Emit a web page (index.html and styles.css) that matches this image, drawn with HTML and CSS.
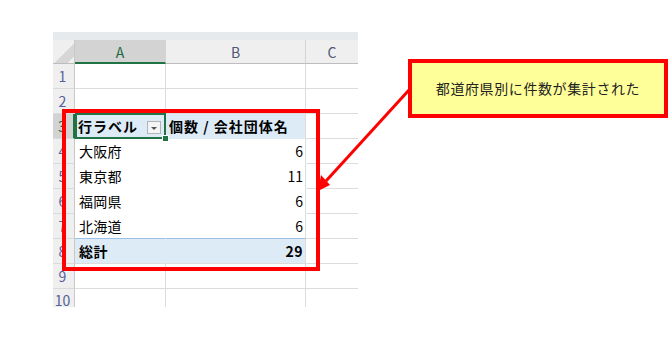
FILE: index.html
```html
<!DOCTYPE html>
<html lang="ja">
<head>
<meta charset="utf-8">
<title>ピボットテーブル</title>
<link rel="stylesheet" href="styles.css">
</head>
<body>
<div class="page">
  <div class="sheet">
    <div class="strip"></div>
    <div class="grid">
      <div class="corner"></div>
      <div class="colhead selected">A</div>
      <div class="colhead">B</div>
      <div class="colhead last">C</div>

      <div class="rowhead">1</div><div class="cell"></div><div class="cell"></div><div class="cell last"></div>
      <div class="rowhead">2</div><div class="cell"></div><div class="cell"></div><div class="cell last"></div>

      <div class="rowhead active">3</div>
      <div class="cell pv-head label active-cell"><span>行ラベル</span><span class="filter"></span></div>
      <div class="cell pv-head">個数 / 会社団体名</div>
      <div class="cell last"></div>

      <div class="rowhead">4</div><div class="cell pv label">大阪府</div><div class="cell pv num">6</div><div class="cell last"></div>
      <div class="rowhead">5</div><div class="cell pv label">東京都</div><div class="cell pv num">11</div><div class="cell last"></div>
      <div class="rowhead">6</div><div class="cell pv label">福岡県</div><div class="cell pv num">6</div><div class="cell last"></div>
      <div class="rowhead">7</div><div class="cell pv label pv-end">北海道</div><div class="cell pv num pv-end">6</div><div class="cell last"></div>

      <div class="rowhead">8</div><div class="cell pv-total label">総計</div><div class="cell pv-total num">29</div><div class="cell last"></div>
      <div class="rowhead">9</div><div class="cell"></div><div class="cell"></div><div class="cell last"></div>
      <div class="rowhead end">10</div><div class="cell end"></div><div class="cell end"></div><div class="cell last end"></div>
    </div>
  </div>

  <!-- annotation: red frame around the pivot table, callout and arrow -->
  <div class="frame"></div>
  <div class="callout">都道府県別に件数が集計された</div>
  <svg class="arrow" width="670" height="341" viewBox="0 0 670 341">
    <line x1="409" y1="90" x2="326" y2="181" stroke="#ff0000" stroke-width="3"/>
    <polygon points="318,191 330,185 321,175" fill="#ff0000"/>
  </svg>
</div>
</body>
</html>
```
FILE: styles.css
```css
html, body {
  margin: 0;
  padding: 0;
  background: #ffffff;
}

.page {
  position: relative;
  width: 670px;
  height: 341px;
  overflow: hidden;
  font-family: "Noto Sans CJK JP", "Noto Sans", sans-serif;
  color: #000;
}

.sheet {
  padding: 32px 0 0 53px;
  width: 305px;
}

.strip {
  height: 8px;
  background: #e6eaec;
}

.grid {
  display: grid;
  grid-template-columns: 22px 91px 140px 52px;
  grid-template-rows: 24px repeat(9, 25px) 18px;
}

.grid > div {
  box-sizing: border-box;
}

/* headers */
.corner {
  background:
    linear-gradient(135deg, transparent 55%, #d6d6d6 55%, #d6d6d6 85%, transparent 85%) no-repeat,
    #efefef;
  border-right: 1px solid #c8c8c8;
  border-bottom: 1px solid #bdbdbd;
}

.colhead {
  background: #efefef;
  border-right: 1px solid #d4d4d4;
  border-bottom: 1px solid #bdbdbd;
  font-size: 14px;
  color: #4f5872;
  display: flex;
  align-items: center;
  justify-content: center;
  padding-top: 1px;
}

.colhead.selected {
  background: #d3d3d3;
  color: #1e6b41;
  border-bottom: 2px solid #217346;
}

.colhead.last {
  border-right: none;
}

.rowhead {
  background: #efefef;
  border-right: 1px solid #c8c8c8;
  border-bottom: 1px solid #dadada;
  font-size: 14px;
  color: #55609a;
  display: flex;
  align-items: center;
  justify-content: center;
  padding-right: 2px;
}

.rowhead.active {
  background: #d3d3d3;
  color: #1e6b41;
  border-right: 2px solid #217346;
}

.rowhead.end {
  border-bottom: none;
  align-items: flex-start;
  padding-top: 1px;
}

/* cells */
.cell {
  border-right: 1px solid #dcdcdc;
  border-bottom: 1px solid #dcdcdc;
  font-size: 14px;
  line-height: 1;
  display: flex;
  align-items: center;
  white-space: nowrap;
}

.cell.last {
  border-right: none;
}

.cell.end {
  border-bottom: none;
}

.label {
  padding-left: 4px;
}

.num {
  justify-content: flex-end;
  padding-right: 2px;
}

/* pivot table */
.pv-head {
  background: #ddebf7;
  border-bottom-color: #ddebf7;
  border-right-color: #ddebf7;
  font-weight: bold;
  letter-spacing: 1px;
  padding-left: 3px;
}

.pv-head.label {
  justify-content: space-between;
  padding-right: 4px;
}

.pv-head + .pv-head {
  border-right-color: #dcdcdc;
}

.pv {
  border-bottom-color: #ffffff;
}

.pv.label {
  border-right-color: #ffffff;
  letter-spacing: 0.3px;
}

.pv.pv-end {
  border-bottom-color: #9bc2e6;
}

.pv-total {
  background: #ddebf7;
  font-weight: bold;
  letter-spacing: 0.5px;
}

.pv-total.label {
  border-right-color: #ddebf7;
}

.active-cell {
  position: relative;
}

.active-cell::before {
  content: "";
  position: absolute;
  left: 0;
  top: -1px;
  right: -1px;
  bottom: -1px;
  border: 2px solid #217346;
}

.active-cell::after {
  content: "";
  position: absolute;
  right: -4px;
  bottom: -4px;
  width: 5px;
  height: 5px;
  background: #217346;
  border: 1px solid #ffffff;
}

.filter {
  width: 14px;
  height: 13px;
  box-sizing: border-box;
  border: 1px solid #b4b4b4;
  background: #f4f4f4;
  display: flex;
  align-items: center;
  justify-content: center;
  margin-top: 2px;
}

.filter::after {
  content: "";
  border-left: 3px solid transparent;
  border-right: 3px solid transparent;
  border-top: 3px solid #555;
  margin-top: 2px;
}

/* annotations */
.frame {
  position: absolute;
  left: 62px;
  top: 109px;
  width: 258px;
  height: 162px;
  box-sizing: border-box;
  border: 4px solid #ff0000;
}

.callout {
  position: absolute;
  left: 408px;
  top: 59px;
  width: 260px;
  height: 59px;
  box-sizing: border-box;
  border: 4px solid #ff0000;
  background: #ffff99;
  font-size: 14px;
  letter-spacing: 0.6px;
  color: #222;
  display: flex;
  align-items: center;
  justify-content: center;
  padding-bottom: 2px;
}

.arrow {
  position: absolute;
  left: 0;
  top: 0;
}
```
